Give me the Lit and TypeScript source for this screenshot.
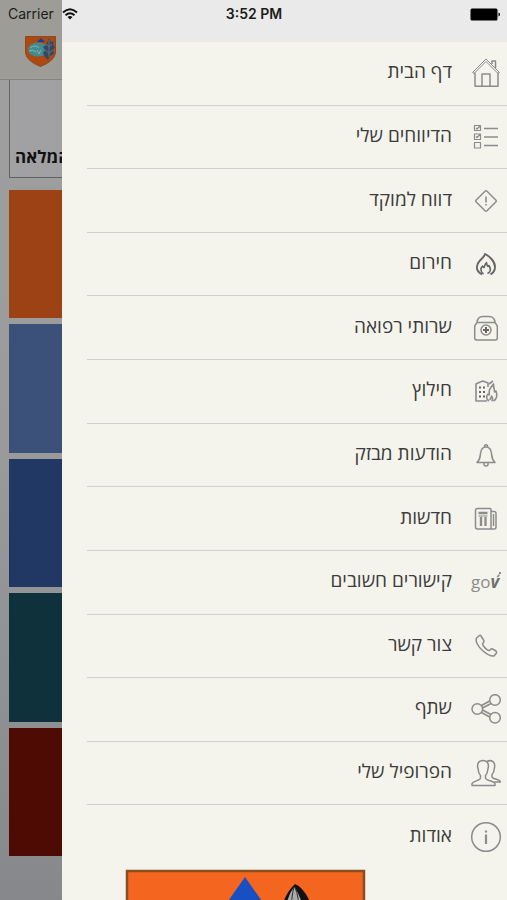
import { LitElement, html, svg, css } from "lit";
import { customElement } from "lit/decorators.js";

const icons = {
  home: svg`<path d="M1.500 14.500 15 1l13.500 13.500-1.500 1L15 3.500 3 15.500z" stroke-width="1" /><path d="M4 14.500v13.800h23V14.500M11 28V16h8v12M21 6V3h3.500v7" stroke-width="1.500" />`,
  list: svg`<path d="M3.500 3.500h6v5h-6zM3.500 12h6v5.500h-6zM3.500 20.500h6v5.500h-6zM5 6l1 1 3-3M5 14.500l1 1 3-3" stroke-width="1.200" /><path d="M13 6.500h14M13 15h14M13 23.500h14" stroke-width="1.300" />`,
  alert: svg`<path d="M14 5.200q1-1 2 0l8.800 8.800q1 1 0 2L16 24.800q-1 1-2 0L5.200 16q-1-1 0-2z" /><path d="M15 10.500v6M15 18v1.600" stroke-width="1.600" />`,
  fire: svg`<g stroke-width="1.900" stroke="#666"><path d="M11 25.300C4 22 5 15.500 9 11.500c2.500-2.500 4.500-4 5-6.500C18 7 24 12 24 18c0 3.500-2 6-4.500 7.300" /><path d="M12.500 25c-3.500-2.500-3-6-1-8 .3 1.200.8 1.600 1.500 1.500 1-1.800.8-3.500 2.500-5 0 2 .7 3 1.500 4l1-1c2.500 4 1.500 6.500-1.500 8" stroke-width="1.600" /></g>`,
  medical: svg`<path d="M6 9.500 3.700 13v12q0 2 2 2h18.600q2 0 2-2V13L24 9.500zM6 9.500Q6.500 3.500 12 3.500h6q5.500 0 6 6" /><circle cx="15" cy="17" r="5" /><path d="M15 14v6M12 17h6" stroke="#666" stroke-width="2" />`,
  rescue: svg`<path d="M16 25H5V8l3-1.500 4-1.500 5 2v4" stroke-width="1.600" /><path d="M9 10.500v2M13 10.500v2M9 15v2M13 15v2M9 19.500v2M13 19.500v2" stroke-width="2" stroke="#666" /><path d="M18 25c-3-2-3-5-1-7l1 1c1-2-1-4 1.500-7l3-4c0 4 1 5 1 8l1.500-1c1.500 4 .5 8-2.500 10M19 24c0-2 1.500-2 1.500-4 1.500 2 1.500 4 0 5M18 8l4-3" stroke-width="1.600" />`,
  bell: svg`<path d="M13.500 6.500V5.500q1.500-1.500 3 0v1M6 22.500c3-3 3-4.500 3.500-9C10 9 12 7 15 7s5 2 5.500 6.500c.5 4.500.5 6 3.500 9zM13 23v2q2 2 4 0v-2" />`,
  news: svg`<path d="M6.500 4.500h12.500q1 0 1 1V25H6.500Q4.500 25 4.500 23V6.500q0-2 2-2zM20 7.500h3q2 0 2 2V23q0 2-2 2h-3M22.500 10v12" /><path d="M7.500 9h9M10 13v9M14.500 13v9" stroke-width="2.400" /><path d="M7.500 12h9" stroke-width="1" />`,
  gov: svg`<g stroke="none" fill="#8c8c8c"><text x="0" y="21" font-size="17">go<tspan font-weight="700" font-style="italic" fill="#6f6f6f">v</tspan></text><path d="M25.500 9.500l2.500-2.500 1 1-2 2.500zM28 5h2v2h-2z" /></g>`,
  phone: svg`<path d="M8.500 4.500 5.500 7c-1.500 3.500 2 9 6 12.500 4 3.600 8 6 11.500 5.500l2.500-3q.5-1-.5-2l-3.500-2q-1-.5-2 .5l-1 1c-2 .5-7-4.500-7-7l1-1q.8-1 .3-2L10 5q-.5-1-1.500-.5z" />`,
  share: svg`<circle cx="6.300" cy="15" r="5.300" /><circle cx="24" cy="6" r="5.300" /><circle cx="24" cy="23.700" r="5.300" /><path d="M10.500 11.500 18.700 7M11.500 14 20 9.500M11.500 16 20 20.500M10.500 18.500l8.200 4.500" />`,
  profile: svg`<path d="M1 27.500v-2C2 23 9.500 22.500 9.500 20v-2.500C7.500 15.500 7.300 13.500 7.200 11.500 5.500 6 7.500 2.500 12 2.500s6.500 3.500 4.800 9c-.1 2-.3 4-2.300 6V20c0 2.500 8.500 3 9.500 5.500v2z" /><path d="M15.500 3.800c5-3 9.500.5 7.800 6.700 0 2-.3 4-2.300 6V19c0 2 7 2 8.500 4.500v.5h-6" />`,
  info: svg`<circle cx="15" cy="15" r="14.300" /><path d="M15 12.500v9.500M15 8.500v2" stroke-width="2.200" />`,
};

const items: { label: string; icon: keyof typeof icons }[] = [
  { label: "דף הבית", icon: "home" },
  { label: "הדיווחים שלי", icon: "list" },
  { label: "דווח למוקד", icon: "alert" },
  { label: "חירום", icon: "fire" },
  { label: "שרותי רפואה", icon: "medical" },
  { label: "חילוץ", icon: "rescue" },
  { label: "הודעות מבזק", icon: "bell" },
  { label: "חדשות", icon: "news" },
  { label: "קישורים חשובים", icon: "gov" },
  { label: "צור קשר", icon: "phone" },
  { label: "שתף", icon: "share" },
  { label: "הפרופיל שלי", icon: "profile" },
  { label: "אודות", icon: "info" },
];

@customElement("status-bar")
export class StatusBar extends LitElement {
  static styles = css`
    :host {
      display: grid;
      grid-template-columns: 1fr auto 1fr;
      align-items: center;
      height: 28px;
      padding: 0 7px 0 8px;
      font: 14px/20px Inter, "Liberation Sans", sans-serif;
      color: #1c1c1c;
    }
    .carrier { display: flex; align-items: center; gap: 8px; }
    .time { font-size: 14px; font-weight: 600; }
    .battery { justify-self: end; }
    svg { display: block; }
  `;
  render() {
    return html`
      <div class="carrier">
        <span>Carrier</span>
        <svg width="16" height="12" viewBox="0 0 16 12" fill="none" stroke="#111" stroke-width="2">
          <path d="M1 4.500q7-6.500 14 0M3.500 7.300q4.500-4 9 0" />
          <path d="M5.500 9q2.500-2 5 0L8 11.500z" fill="#111" stroke="none" />
        </svg>
      </div>
      <span class="time">3:52 PM</span>
      <svg class="battery" width="30" height="13" viewBox="0 0 30 13">
        <rect x=".5" y=".5" width="27" height="12" rx="1.500" />
        <path d="M28.500 4.500q1.500.5 1.500 2t-1.500 2z" />
      </svg>
    `;
  }
}

@customElement("home-page")
export class HomePage extends LitElement {
  static styles = css`
    :host {
      display: flex;
      flex-direction: column;
      box-sizing: border-box;
      min-height: 100vh;
      background: linear-gradient(#a0a0a1, #9a9a9b 50%, #86888b);
      font-family: "Open Sans", "Noto Sans", sans-serif;
    }
    .header {
      box-sizing: border-box;
      height: 80px;
      padding: 36px 25px 0;
      background: #9e9c97;
      border-bottom: 1px solid #858380;
    }
    .crest { display: block; }
    .banner {
      box-sizing: border-box;
      display: flex;
      align-items: flex-end;
      height: 98px;
      margin: 0 9px;
      padding: 0 5px 8px;
      border: 1px solid #626262;
      border-top: 0;
      background: #a1a1a3;
    }
    .title { margin: 0; font-size: 17px; line-height: 24px; font-weight: 700; color: #111; }
    .tiles {
      flex: 1;
      display: grid;
      grid-auto-rows: 1fr;
      gap: 6px;
      padding: 12px 9px 44px;
    }
    .orange { background: #9c4215; }
    .sky { background: #3c5179; }
    .blue { background: #213865; }
    .teal { background: #0f313c; }
    .red { background: #4e0b04; }
  `;
  render() {
    return html`
      <header class="header">
        <svg class="crest" width="31" height="31" viewBox="0 0 31 31">
          <path d="M.5.5h30V17q-1 8-15 13.500Q1.500 25 .5 17z" fill="#ad4a12" stroke="#8a4a20" />
          <path d="M12 6l4-4 4 4z" fill="#173f9a" />
          <ellipse cx="13" cy="13.500" rx="10" ry="7" fill="#438b91" />
          <path d="M5 12q5-4 9 0M4 15q4-2 7 1M12 14l2 4 2-4" stroke="#83b4aa" fill="none" />
          <path d="M24 2l2 4 3-1-1 4 2 2-2 3 1 4-4 2-2 4-3-3-2-4 2-3-2-3 3-2z" fill="#354861" />
          <path d="M24 4v17M21 8l3 3 3-3M20 14l4 3 4-3" stroke="#66707c" fill="none" />
        </svg>
      </header>
      <section class="banner"><h1 class="title" dir="rtl">המלאה</h1></section>
      <section class="tiles">
        <div class="orange"></div>
        <div class="sky"></div>
        <div class="blue"></div>
        <div class="teal"></div>
        <div class="red"></div>
      </section>
    `;
  }
}

@customElement("side-menu")
export class SideMenu extends LitElement {
  static styles = css`
    :host {
      display: flex;
      flex-direction: column;
      background: #f4f4ed;
      font-family: "Open Sans", "Noto Sans", sans-serif;
      overflow: hidden;
    }
    .top { flex: none; height: 42px; background: #eaeaea; }
    .nav { flex: 1; display: flex; padding-left: 25px; }
    .list {
      flex: 1;
      display: grid;
      grid-auto-rows: 1fr;
      margin: 0;
      padding: 0;
      list-style: none;
    }
    .item { display: flex; border-bottom: 1px solid #d0d0cc; }
    .item:last-child { border-bottom-color: transparent; }
    .link {
      flex: 1;
      display: flex;
      align-items: center;
      gap: 19px;
      padding: 0 6px;
      color: #3c3c3c;
      text-decoration: none;
    }
    .label { font-size: 19px; line-height: 24px; padding-bottom: 4px; }
    .icon {
      flex: none;
      fill: none;
      stroke: #8c8c8a;
      stroke-width: 1.5;
      stroke-linejoin: round;
    }
    .logo { flex: none; height: 31px; padding-left: 63px; overflow: hidden; }
    .emblem { display: block; }
  `;
  render() {
    return html`
      <div class="top"></div>
      <nav class="nav" aria-label="תפריט">
        <ul class="list" dir="rtl">
          ${items.map(
            (item) => html`<li class="item">
              <a class="link" href="#${item.icon}">
                <svg class="icon" width="30" height="30" viewBox="0 0 30 30" direction="ltr" aria-hidden="true">${icons[item.icon]}</svg>
                <span class="label">${item.label}</span>
              </a>
            </li>`
          )}
        </ul>
      </nav>
      <div class="logo">
        <svg class="emblem" width="241" height="240" viewBox="0 0 241 240">
          <path d="M2 2h237V150q-10 60-118 88Q10 210 2 150z" fill="#f4651f" stroke="#8a4f20" stroke-width="2.500" />
          <path d="M120 8 165 72H75z" fill="#1850c4" />
          <path d="M170 15q11 4 20 30v40h-35V45q4-20 15-30z" fill="#111" />
          <path d="M169 18q-8 10-9 30h20q-3-20-11-30z" fill="#aaa" />
          <path d="M169 18q-3 10-3 30M170 18q4 10 5 30" fill="none" stroke="#333" />
        </svg>
      </div>
    `;
  }
}

@customElement("app-root")
export class AppRoot extends LitElement {
  static styles = css`
    :host { display: block; position: relative; overflow: hidden; }
    .drawer { position: absolute; inset: 0 0 0 62px; }
    .status { position: absolute; inset: 0 0 auto; }
  `;
  render() {
    return html`
      <home-page></home-page>
      <side-menu class="drawer"></side-menu>
      <status-bar class="status"></status-bar>
    `;
  }
}
